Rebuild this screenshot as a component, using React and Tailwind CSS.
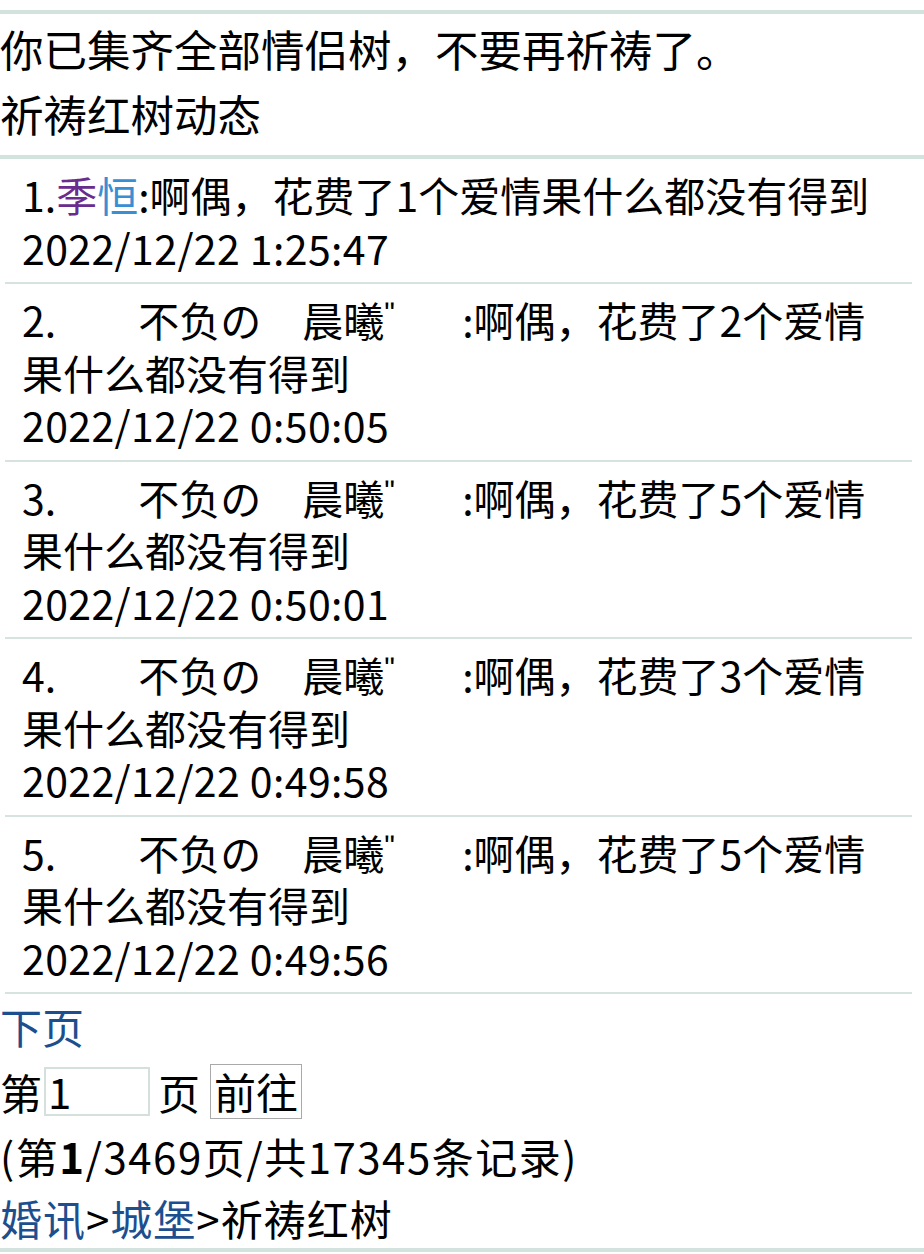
import React from 'react';

const font = { fontFamily: '"Noto Sans CJK SC", "Noto Sans", sans-serif' };

const records = [
    { n: 2, cost: 2, time: '2022/12/22 0:50:05' },
    { n: 3, cost: 5, time: '2022/12/22 0:50:01' },
    { n: 4, cost: 3, time: '2022/12/22 0:49:58' },
    { n: 5, cost: 5, time: '2022/12/22 0:49:56' },
];

const Item = ({ children, time }) => (
    <div className="ml-[5px] mr-[12px] border-b-2 border-[#d6e3df] pl-[17px] pr-[20px] py-[9px] text-[41px] leading-[52.5px] text-black">
        <div>{children}</div>
        <div className="tracking-[0.4px]">{time}</div>
    </div>
);

const App = () => {
    return (
        <div className="w-[924px] min-h-[1254px] bg-white pt-[10px] text-black" style={font}>
            <div className="border-t-4 border-[#d2e3dd]" />
            <div className="pt-[2px] pb-[9px] text-[43.5px] leading-[65px]">
                <div>你已集齐全部情侣树，不要再祈祷了。</div>
                <div>祈祷红树动态</div>
            </div>
            <div className="border-t-4 border-[#d2e3dd]" />

            <Item time="2022/12/22 1:25:47">
                1.<span className="text-[#6a2d8f]">季</span>
                <span className="text-[#3a8fd3]">恒</span>:啊偶，花费了1个爱情果什么都没有得到
            </Item>
            {records.map((r) => (
                <Item key={r.n} time={r.time}>
                    {r.n}.{'\u3000\u3000'}不负の{'\u3000'}晨曦
                    <span
                        className="-mr-[6px] inline-block w-[2px] -translate-y-[14px] overflow-visible text-[30px] leading-none"
                        style={{ fontFamily: '"Liberation Sans", sans-serif' }}
                    >
                        ʺ
                    </span>
                    {'\u3000\u3000'}:啊偶，花费了{r.cost}个爱情果什么都没有得到
                </Item>
            ))}

            <div className="text-[42px]">
                <div className="leading-[64px] text-[#1d4f8f]">下页</div>
                <div className="flex h-[66px] items-center">
                    <span>第</span>
                    <div className="ml-[2px] flex h-[49px] w-[106px] items-center border-2 border-[#d5e0dd] pl-[2px] leading-none">
                        1
                    </div>
                    <span className="ml-[8px]">页</span>
                    <button className="ml-[10px] h-[55px] w-[92px] border border-[#a9a9a9] bg-white leading-none">
                        前往
                    </button>
                </div>
                <div className="leading-[64px] tracking-[1.5px]">
                    (第<b>1</b>/3469页/共17345条记录)
                </div>
                <div className="border-b-4 border-[#d2e3dd] leading-[60px] tracking-[1px]">
                    <span className="text-[#1d4f8f]">婚讯</span>&gt;
                    <span className="text-[#1d4f8f]">城堡</span>&gt;祈祷红树
                </div>
            </div>
        </div>
    );
};

export default App;
